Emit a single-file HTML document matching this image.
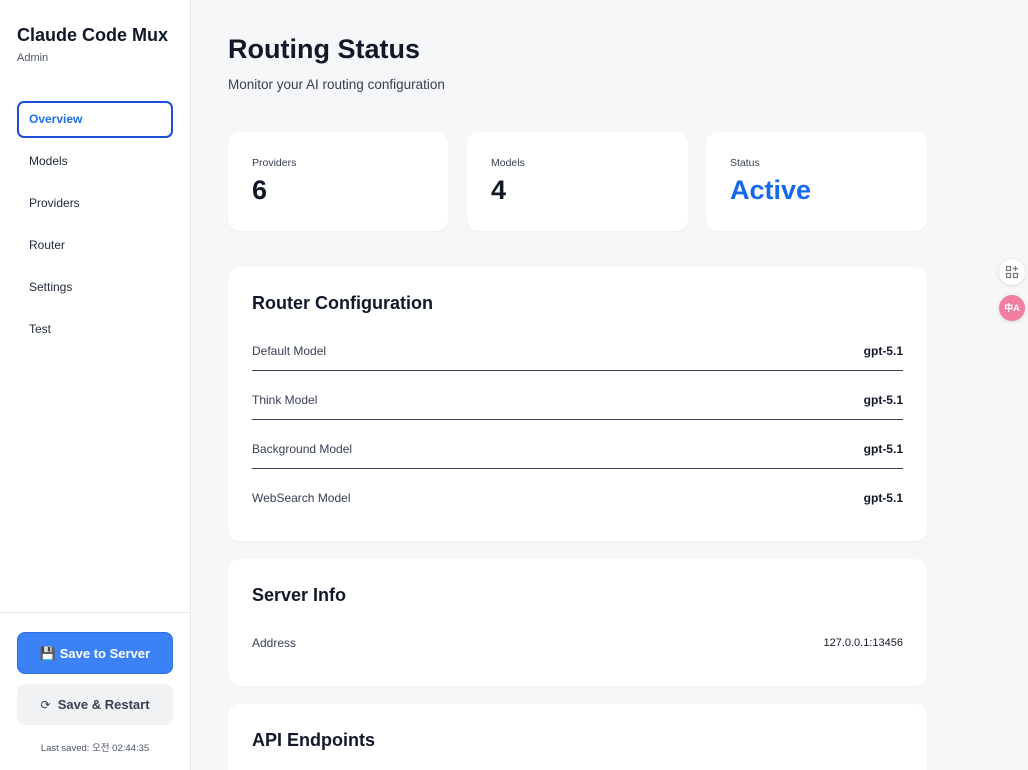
<!DOCTYPE html>
<html style="overflow:hidden;height:770px"><head><meta charset="utf-8"><style>
*{box-sizing:border-box;margin:0;padding:0}
body{width:1028px;height:770px;overflow:hidden;font-family:"Liberation Sans","Noto Sans CJK KR",sans-serif;background:#f6f7f9;color:#111827;position:relative}
.sb{position:absolute;left:0;top:0;width:191px;height:770px;background:#fff;border-right:1px solid #e5e7eb}
.sb h1{position:absolute;left:17px;top:25px;font-size:18px;font-weight:700;color:#111827}
.sb .adm{position:absolute;left:17px;top:52px;font-size:11px;color:#4b5563}
.nav{position:absolute;left:17px;width:156px;height:37px;font-size:12px;color:#1f2937;padding-left:12px;line-height:37px}
.nav.act{border:2px solid #1d4ed8;border-radius:7px;color:#1f6feb;font-weight:700;padding-left:10px;line-height:33px}
.bot{position:absolute;left:0;top:612px;width:190px;border-top:1px solid #e5e7eb}
.btn{position:absolute;left:17px;width:156px;height:42px;border-radius:8px;font-size:13px;font-weight:700;text-align:center;line-height:42px}
.b1{top:632px;background:#3b82f6;color:#fff;border:1px solid #2f6fe0}
.b2{top:684px;background:#f1f2f4;color:#374151;height:41px}
.ls{position:absolute;left:0;width:190px;top:740px;text-align:center;font-size:9.5px;color:#4b5563}
.main h2{position:absolute;left:228px;top:34px;font-size:27px;font-weight:700}
.sub{position:absolute;left:228px;top:77px;font-size:13.5px;color:#374151}
.card{position:absolute;background:#fff;border-radius:12px;box-shadow:0 1px 2px rgba(0,0,0,.04)}
.st .l{position:absolute;left:24px;top:25px;font-size:10.5px;color:#374151}
.st .v{position:absolute;left:24px;top:43px;font-size:27px;font-weight:700}
.ct{position:absolute;left:24px;font-size:18px;font-weight:700}
.row{position:absolute;left:24px;right:24px;height:36px;font-size:12px;color:#374151;border-bottom:1px solid #374151}
.row span{position:absolute;top:0;line-height:32px}
.row b{position:absolute;right:0;top:0;line-height:32px;color:#111827;font-size:12px}
.fab{position:absolute;left:999px;width:26px;height:26px;border-radius:50%;background:#fff;box-shadow:0 1px 4px rgba(0,0,0,.12)}
</style></head><body>
<div class="sb">
<h1>Claude Code Mux</h1><div class="adm">Admin</div>
<div class="nav act" style="top:101px">Overview</div>
<div class="nav" style="top:143px">Models</div>
<div class="nav" style="top:185px">Providers</div>
<div class="nav" style="top:227px">Router</div>
<div class="nav" style="top:269px">Settings</div>
<div class="nav" style="top:311px">Test</div>
<div class="bot"></div>
<div class="btn b1">💾 Save to Server</div>
<div class="btn b2"><span style="font-weight:400;font-size:12px">⟳</span>&nbsp; Save &amp; Restart</div>
<div class="ls">Last saved: 오전 02:44:35</div>
</div>
<div class="main">
<h2>Routing Status</h2>
<div class="sub">Monitor your AI routing configuration</div>
<div class="card st" style="left:228px;top:132px;width:220px;height:99px"><div class="l">Providers</div><div class="v">6</div></div>
<div class="card st" style="left:467px;top:132px;width:221px;height:99px"><div class="l">Models</div><div class="v">4</div></div>
<div class="card st" style="left:706px;top:132px;width:221px;height:99px"><div class="l">Status</div><div class="v" style="color:#1668f0">Active</div></div>
<div class="card" style="left:228px;top:267px;width:699px;height:274px">
<div class="ct" style="top:26px">Router Configuration</div>
<div class="row" style="top:68px"><span>Default Model</span><b>gpt-5.1</b></div>
<div class="row" style="top:117px"><span>Think Model</span><b>gpt-5.1</b></div>
<div class="row" style="top:166px"><span>Background Model</span><b>gpt-5.1</b></div>
<div class="row" style="top:215px;border:none"><span>WebSearch Model</span><b>gpt-5.1</b></div>
</div>
<div class="card" style="left:228px;top:559px;width:699px;height:127px">
<div class="ct" style="top:26px">Server Info</div>
<div class="row" style="top:68px;border:none"><span>Address</span><b style="font-weight:400;font-size:11px">127.0.0.1:13456</b></div>
</div>
<div class="card" style="left:228px;top:704px;width:699px;height:66px;border-radius:12px 12px 0 0">
<div class="ct" style="top:26px">API Endpoints</div>
</div>
</div>
<div class="fab" style="top:259px"><svg width="26" height="26" viewBox="0 0 26 26" fill="none" stroke="#777" stroke-width="1.2"><rect x="7.5" y="7.5" width="4" height="4"/><rect x="7.5" y="14.5" width="4" height="4"/><rect x="14.5" y="14.5" width="4" height="4"/><path d="M16.5 7v5M14 9.5h5"/></svg></div>
<div class="fab" style="top:295px;background:#f07ea0"><div style="color:#fff;font-size:9px;font-weight:700;text-align:center;line-height:26px">中A</div></div>
</body></html>
